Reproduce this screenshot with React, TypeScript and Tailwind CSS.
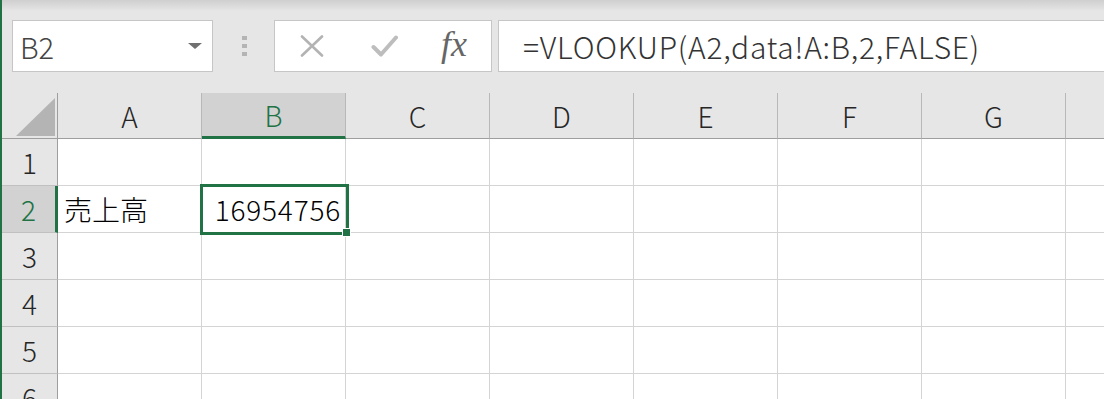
import React from 'react'

const cols = ['A', 'B', 'C', 'D', 'E', 'F', 'G', 'H']
const rows = [1, 2, 3, 4, 5, 6]

const font = { fontFamily: '"Noto Sans CJK JP", "Noto Sans", sans-serif' }

function XIcon() {
  return (
    <svg width="24" height="22" viewBox="0 0 24 22" fill="none">
      <path d="M2 1.5L22 20.5M22 1.5L2 20.5" stroke="#b3b3b3" strokeWidth="2.6" strokeLinecap="round" />
    </svg>
  )
}

function CheckIcon() {
  return (
    <svg width="27" height="22" viewBox="0 0 27 22" fill="none">
      <path d="M2.5 12L10 19.5L25 2.5" stroke="#bdbdbd" strokeWidth="4" strokeLinecap="round" strokeLinejoin="round" />
    </svg>
  )
}

export default function App() {
  return (
    <div
      className="relative w-[1104px] h-[399px] overflow-hidden bg-white border-l-2 border-[#217346] font-light"
      style={font}
    >
      {/* toolbar */}
      <div className="h-[93px] bg-gradient-to-b from-[#cfcfcf] via-[#e6e6e6] via-[12%] to-[#e6e6e6] flex items-start pt-[20px] pl-[10px]">
        <div className="w-[201px] h-[52px] bg-white border border-[#c6c6c6] flex items-center justify-between pl-[7px] pr-[10px]">
          <span className="text-[29px] leading-none text-[#444]">B2</span>
          <span className="w-0 h-0 border-l-[7px] border-r-[7px] border-t-[6px] border-l-transparent border-r-transparent border-t-[#707070]" />
        </div>
        <div className="w-[61px] h-[52px] flex flex-col items-center justify-center gap-[4px] pl-[1px]">
          <span className="w-[5px] h-[4px] bg-[#b4b4b4]" />
          <span className="w-[5px] h-[4px] bg-[#b4b4b4]" />
          <span className="w-[5px] h-[4px] bg-[#b4b4b4]" />
        </div>
        <div className="w-[218px] h-[52px] bg-white border border-[#c6c6c6] flex items-center pl-[25px]">
          <XIcon />
          <span className="ml-[47px]">
            <CheckIcon />
          </span>
          <span
            className="ml-[43px] text-[36px] italic text-[#666] leading-none -mt-[5px] font-normal"
            style={{ fontFamily: '"Liberation Serif", serif' }}
          >
            fx
          </span>
        </div>
        <div className="ml-[6px] flex-1 h-[52px] bg-white border border-[#c6c6c6] border-r-0 flex items-center pl-[24px]">
          <span className="text-[30px] leading-none text-[#333] tracking-[0.75px]">=VLOOKUP(A2,data!A:B,2,FALSE)</span>
        </div>
      </div>

      {/* sheet */}
      <div className="grid grid-cols-[56px_repeat(8,144px)]">
        <div className="h-[46px] bg-[#e6e6e6] border-r border-b border-[#9e9e9e] flex items-end justify-end pr-[2px] pb-[2px]">
          <div className="w-0 h-0 border-l-[39px] border-b-[38px] border-l-transparent border-b-[#b4b4b4]" />
        </div>
        {cols.map((c) =>
          c === 'B' ? (
            <div
              key={c}
              className="h-[46px] bg-[#d2d2d2] border-r border-r-[#b8b8b8] border-b-[3px] border-b-[#217346] flex items-center justify-center text-[28px] text-[#217346]"
            >
              {c}
            </div>
          ) : (
            <div
              key={c}
              className="h-[46px] bg-[#e6e6e6] border-r border-r-[#b8b8b8] border-b border-b-[#9e9e9e] flex items-center justify-center text-[28px] text-[#262626]"
            >
              {c}
            </div>
          )
        )}
        {rows.map((r) => (
          <React.Fragment key={r}>
            {r === 2 ? (
              <div className="h-[47px] bg-[#d2d2d2] border-r-[3px] border-r-[#217346] border-b border-b-[#c0c0c0] flex items-center justify-center text-[28px] text-[#217346]">
                {r}
              </div>
            ) : (
              <div className="h-[47px] bg-[#e6e6e6] border-r border-r-[#9e9e9e] border-b border-b-[#c0c0c0] flex items-center justify-center text-[28px] text-[#262626]">
                {r}
              </div>
            )}
            {cols.map((c) => (
              <div
                key={c}
                className="h-[47px] border-r border-b border-[#d4d4d4] flex items-center px-[5px] text-[28px] text-black whitespace-nowrap"
              >
                {r === 2 && c === 'A' ? <span className="pl-[1px]">売上高</span> : null}
                {r === 2 && c === 'B' ? <span className="ml-auto tracking-[0.8px] -mr-[1px]">16954756</span> : null}
              </div>
            ))}
          </React.Fragment>
        ))}
      </div>

      {/* selection */}
      <div className="absolute left-[198px] top-[184px] w-[149px] h-[51px] border-[3px] border-[#217346] pointer-events-none" />
      <div className="absolute left-[340px] top-[228px] w-[9px] h-[9px] bg-[#217346] border border-white pointer-events-none" />
    </div>
  )
}
